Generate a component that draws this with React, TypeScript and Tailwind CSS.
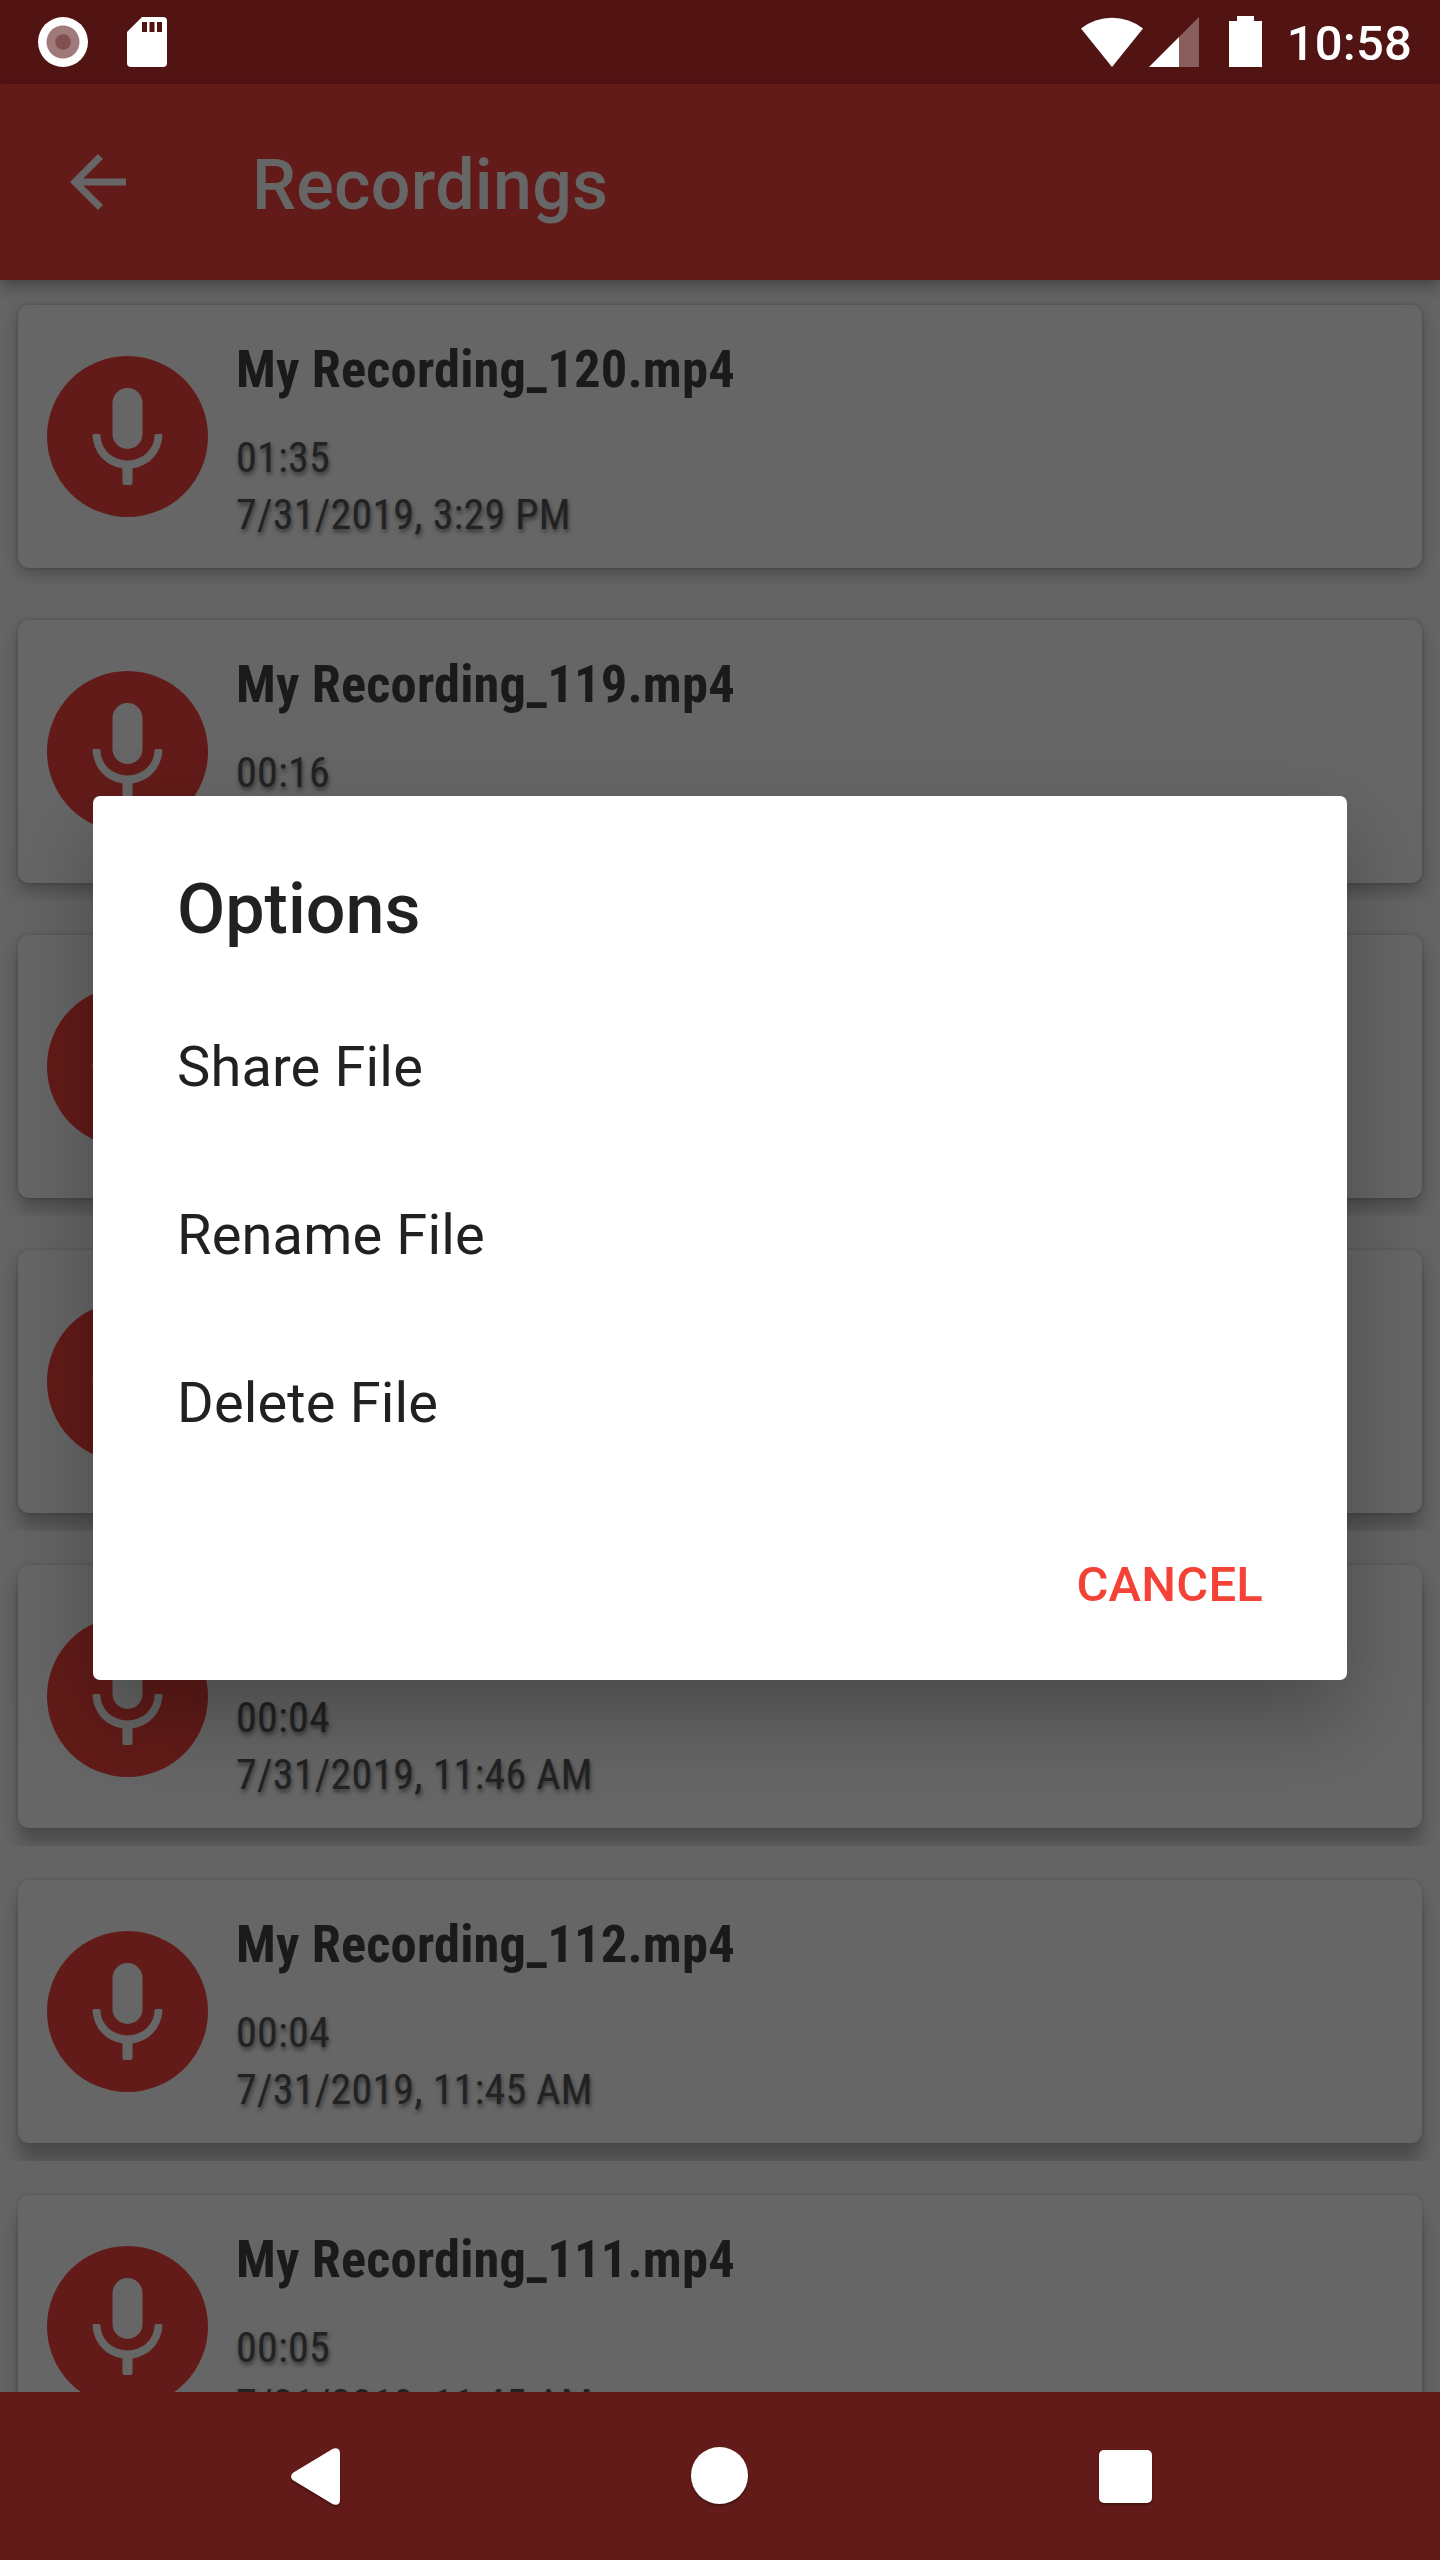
type Recording = { id: number; name?: string; length?: string; date?: string };

const recordings: Recording[] = [
    { id: 1, name: "My Recording_120.mp4", length: "01:35", date: "7/31/2019, 3:29 PM" },
    { id: 2, name: "My Recording_119.mp4", length: "00:16" },
    { id: 3 },
    { id: 4 },
    { id: 5, length: "00:04", date: "7/31/2019, 11:46 AM" },
    { id: 6, name: "My Recording_112.mp4", length: "00:04", date: "7/31/2019, 11:45 AM" },
    { id: 7, name: "My Recording_111.mp4", length: "00:05", date: "7/31/2019, 11:45 AM" },
];

const options = ["Share File", "Rename File", "Delete File"];

function StatusBar() {
    return (
        <div className="flex h-[84px] shrink-0 items-start bg-[#521313] text-white">
            <svg className="ml-[38px] mt-[17px] h-[50px] w-[50px]" viewBox="0 0 50 50">
                <circle cx="25" cy="25" r="25" fill="#fff" />
                <circle cx="25" cy="25" r="16.5" fill="#9f7a7a" />
                <circle cx="25" cy="25" r="7.8" fill="#805050" />
            </svg>
            <svg className="ml-[39px] mt-[17px] h-[50px] w-[40px]" viewBox="0 0 40 50">
                <path d="M15 0h21a4 4 0 0 1 4 4v42a4 4 0 0 1-4 4H4a4 4 0 0 1-4-4V15z" fill="#fff" />
                <path d="M15 5h5v10h-5zM22.5 5h5v10h-5zM30 5h5v10h-5z" fill="#521313" />
            </svg>
            <svg className="ml-auto mt-[17px] h-[50px] w-[62px]" viewBox="0 0 62 50">
                <path d="M0 11.5A50 50 0 0 1 62 11.5L31 50z" fill="#fff" />
            </svg>
            <svg className="ml-[6px] mt-[17px] h-[50px] w-[50px]" viewBox="0 0 50 50">
                <path d="M50 0v50H30V20z" fill="#8b5e5e" />
                <path d="M30 20v30H0z" fill="#fff" />
            </svg>
            <svg className="ml-[30px] mt-[16px] h-[51px] w-[33px]" viewBox="0 0 33 51">
                <path d="M8 0h17v5h8v46H0V5h8z" fill="#fff" />
            </svg>
            <span className="ml-[25px] mr-[28px] mt-[15px] text-[49px] font-medium leading-[58px] tracking-[0.2px]">10:58</span>
        </div>
    );
}

function AppBar() {
    return (
        <div className="relative z-10 flex h-[196px] shrink-0 items-center bg-[#621b18] text-[#666] shadow-[0_6px_14px_rgba(0,0,0,0.32)]">
            <svg className="ml-[56px] h-[84px] w-[84px]" viewBox="0 0 24 24" fill="currentColor">
                <path d="M20 11H7.83l5.59-5.59L12 4l-8 8 8 8 1.41-1.41L7.83 13H20v-2z" />
            </svg>
            <h1 className="ml-[112px] pt-[6px] text-[70px] font-medium leading-[82px] tracking-[0.25px]">Recordings</h1>
        </div>
    );
}

function MicAvatar() {
    return (
        <svg className="h-[161px] w-[161px] shrink-0" viewBox="0 0 161 161">
            <circle cx="80.5" cy="80.5" r="80.5" fill="#621b18" />
            <rect x="65.5" y="32" width="30" height="61" rx="15" fill="#666" />
            <path
                d="M47 78h5a1.5 1.5 0 0 1 1.5 1.5a27 25 0 0 0 54 0a1.5 1.5 0 0 1 1.5-1.5h5a1.5 1.5 0 0 1 1.5 1.5a35 35 0 0 1-30 33.1V127a2 2 0 0 1-2 2h-6a2 2 0 0 1-2-2V112.6a35 35 0 0 1-30-33.1a1.5 1.5 0 0 1 1.5-1.5z"
                fill="#666"
            />
        </svg>
    );
}

function RecordingCard({ recording, index }: { recording: Recording; index: number }) {
    return (
        <div className="h-[299px] shrink-0 overflow-hidden p-[18px]">
            {/* shadow drops further the lower the card sits */}
            <div
                className="flex h-[263px] items-center rounded-[11px] bg-[#666] pl-[29px]"
                style={{ boxShadow: `0 ${6 + index * 2.5}px 16px rgba(0,0,0,0.24), 0 0 4px rgba(0,0,0,0.18)` }}
            >
                <MicAvatar />
                <div className="ml-[28px] flex h-full flex-col whitespace-nowrap font-['Roboto_Condensed','Roboto',sans-serif] tracking-[0.17px] [font-stretch:75%]">
                    <p className="mt-[33px] h-[62px] text-[52.5px] font-bold leading-[62px] text-[#1a1a1a]">{recording.name}</p>
                    <div className="mt-[29px] text-[42px] leading-[57px] tracking-[0.22px] text-[#222] [text-shadow:1px_3px_4px_rgba(0,0,0,0.5)]">
                        <p>{recording.length}</p>
                        <p className="h-[57px]">{recording.date}</p>
                    </div>
                </div>
            </div>
        </div>
    );
}

function OptionsDialog() {
    return (
        <div className="absolute inset-x-[93px] top-[796px] z-20 flex h-[884px] flex-col rounded-[7px] bg-white text-[#212121] shadow-[0_38px_84px_rgba(0,0,0,0.27)]">
            <h2 className="px-[84px] pb-[33px] pt-[72px] text-[70px] font-medium leading-[82px]">Options</h2>
            {options.map((option) => (
                <button key={option} className="flex h-[168px] items-center px-[84px] text-[56px] tracking-[0.15px]">
                    {option}
                </button>
            ))}
            <button className="mr-[84px] mt-[35px] h-[126px] self-end text-[49px] font-medium tracking-[0.2px] text-[#f44336]">
                CANCEL
            </button>
        </div>
    );
}

function NavigationBar() {
    return (
        <div className="relative z-10 flex h-[168px] shrink-0 items-center bg-[#621b18]">
            <svg className="ml-[291px] mt-px h-[57px] w-[49px] drop-shadow-[0_2px_1px_rgba(0,0,0,0.3)]" viewBox="0 0 49 57">
                <path d="M41.5 1Q44-.5 47 .8Q49 2 49 5V52Q49 55 47 56.2Q44 57.5 41.5 56L2.5 32.5Q0 31 0 28.5Q0 26 2.5 24.5z" fill="#fff" />
            </svg>
            <div className="mb-px ml-[351px] size-[57px] rounded-full bg-white shadow-[0_2px_2px_rgba(0,0,0,0.3)]" />
            <div className="mt-px ml-[351px] size-[53px] rounded-[5px] bg-white shadow-[0_2px_2px_rgba(0,0,0,0.3)]" />
        </div>
    );
}

export default function App() {
    return (
        <div className="relative flex h-[2560px] w-[1440px] flex-col overflow-hidden bg-[#646464] font-['Roboto',sans-serif]">
            <StatusBar />
            <AppBar />
            <div className="flex min-h-0 flex-1 flex-col gap-4 overflow-hidden pt-[7px]">
                {recordings.map((recording, i) => (
                    <RecordingCard key={recording.id} recording={recording} index={i} />
                ))}
            </div>
            <NavigationBar />
            <OptionsDialog />
        </div>
    );
}
